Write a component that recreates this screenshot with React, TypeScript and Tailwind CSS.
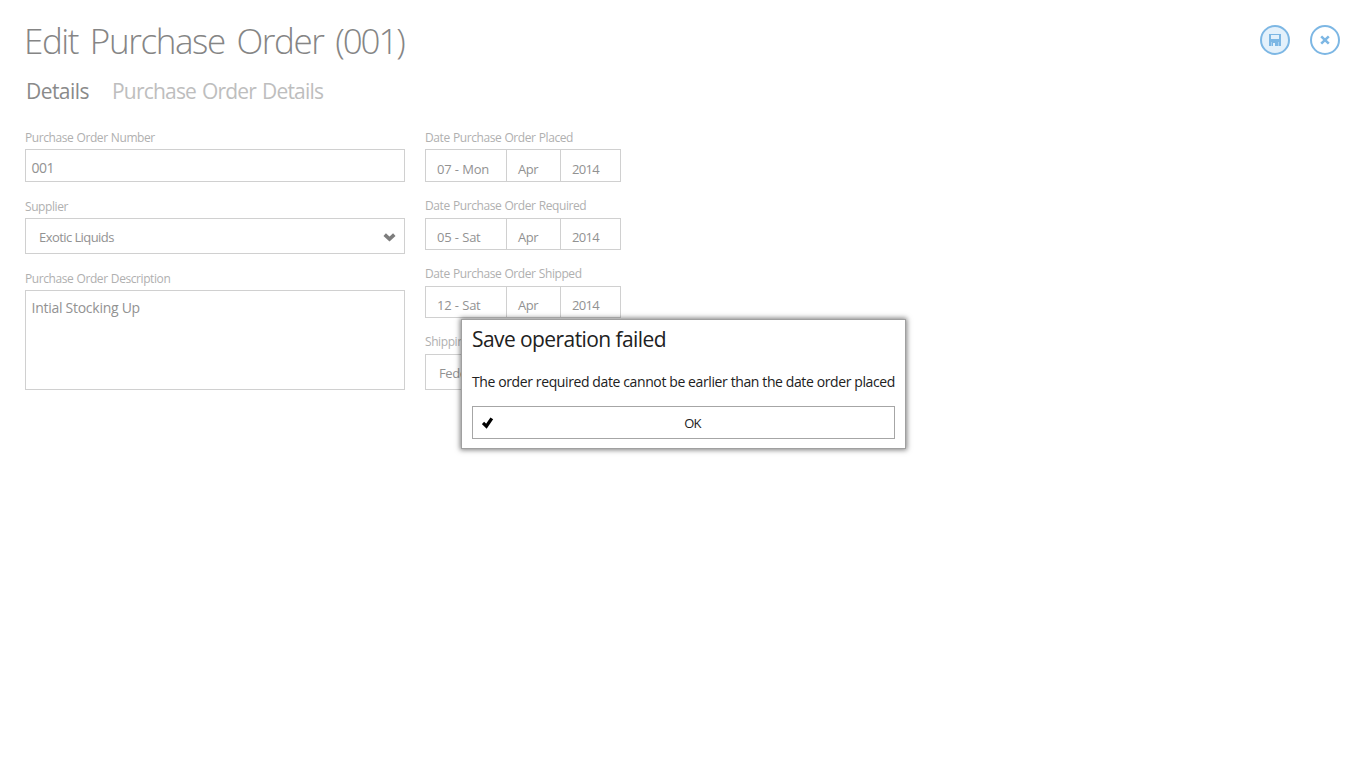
import React from "react";

const label = "text-[12px] leading-4 tracking-[-0.42px] [word-spacing:0.5px] text-[#b0b0b0] whitespace-nowrap";
const box = "border border-[#d0d0d0]";

function DateField({ title, day, first }: { title: string; day: string; first?: boolean }) {
  const cell = `${first ? "pt-[10px]" : "pt-[9px]"} pl-[11px] text-[13px] leading-[18px] text-[#929292] whitespace-nowrap`;
  return (
    <div className="h-[68px]">
      <div className={label}>{title}</div>
      <div className={`${first ? "mt-[3px] h-[33px]" : "mt-1 h-8"} ${box} flex w-[196px]`}>
        <div className={`${cell} w-[81px] border-r border-[#d0d0d0] tracking-[-0.3px] [word-spacing:0.5px]`}>{day}</div>
        <div className={`${cell} w-[54px] border-r border-[#d0d0d0] tracking-[-0.4px]`}>Apr</div>
        <div className={`${cell} flex-1 tracking-[-0.7px]`}>2014</div>
      </div>
    </div>
  );
}

function Chevron() {
  return (
    <svg className="mt-[3px] h-[9px] w-[13px]" viewBox="0 0 13 9" fill="none" stroke="#7d7d7d" strokeWidth="3.6">
      <path d="M1.7 1.6 L6.5 6.1 L11.3 1.6" />
    </svg>
  );
}

export default function App() {
  return (
    <div className="relative h-[768px] w-[1366px] overflow-hidden bg-white pl-[25px] font-['Open_Sans','Noto_Sans',sans-serif]">
      <header className="flex justify-between pr-[26px]">
        <h1 className="mt-[17px] -ml-px h-[48px] text-[35px] leading-[48px] font-light tracking-[-1.4px] [word-spacing:4px] text-[#858585] whitespace-nowrap">
          Edit Purchase Order <span className="tracking-[-2.1px]">(001)</span>
        </h1>
        <div className="mt-[25px] flex gap-5">
          <button className="flex size-[30px] items-center justify-center rounded-full border-2 border-[#7db7e4] bg-[#e4f1fb]">
            <svg className="size-3" viewBox="0 0 12 12" fill="#7db7e4">
              <path fillRule="evenodd" d="M0 0H12V12H0ZM2 1V5H10V1ZM4 9H6V12H4Z" />
              <path d="M2 8H3V12H2ZM9 8H10V12H9Z" fill="#a9d0ee" />
            </svg>
          </button>
          <button className="flex size-[30px] items-center justify-center rounded-full border-2 border-[#7db7e4]">
            <svg className="size-[10px]" viewBox="0 0 10 10" stroke="#7db7e4" strokeWidth="2.6">
              <path d="M1.2 1.4 L8.8 8.6 M8.8 1.4 L1.2 8.6" />
            </svg>
          </button>
        </div>
      </header>

      <nav className="mt-[12px] ml-px flex h-7 text-[21px] leading-7 whitespace-nowrap">
        <div className="w-[86px] tracking-[-0.55px] text-[#8a8a8a]">Details</div>
        <div className="tracking-[-0.8px] [word-spacing:1.2px] text-[#bebebe]">Purchase Order Details</div>
      </nav>

      <main className="mt-[25px] flex gap-5">
        <section className="w-[380px]">
          <div className={label}>Purchase Order Number</div>
          <div className={`${box} mt-[3px] h-[33px] pt-[9px] pl-[5.5px] text-[14px] leading-[18px] tracking-[-0.5px] text-[#929292]`}>001</div>
          <div className={`${label} mt-[17px]`}>Supplier</div>
          <div className={`${box} mt-[3px] flex h-9 items-center justify-between pr-2 pl-[13px] text-[13px] leading-[18px] tracking-[-0.57px] text-[#929292]`}>
            <span className="mt-px">Exotic Liquids</span>
            <Chevron />
          </div>
          <div className={`${label} mt-[17px]`}>Purchase Order Description</div>
          <div className={`${box} mt-[3px] h-[100px] pt-2 pl-[5.5px] text-[14px] leading-[18px] tracking-[-0.27px] text-[#929292]`}>
            Intial Stocking Up
          </div>
        </section>
        <section className="w-[380px]">
          <DateField title="Date Purchase Order Placed" day="07 - Mon" first />
          <DateField title="Date Purchase Order Required" day="05 - Sat" />
          <DateField title="Date Purchase Order Shipped" day="12 - Sat" />
          <div className={label}>Shippin</div>
          <div className={`${box} mt-1 h-9 pt-[9px] pl-[13px] text-[13px] leading-[18px] tracking-[-0.4px] text-[#929292]`}>
            Fede
          </div>
        </section>
      </main>

      <div
        role="dialog"
        className="absolute top-[319px] left-[461px] h-[130px] w-[445px] border border-[#a0a0a0] bg-white px-[10px] pt-[5px] text-[#212121] shadow-[0_0_5px_1px_rgba(0,0,0,0.5)]"
      >
        <h2 className="h-7 text-[21px] leading-7 tracking-[-0.58px] whitespace-nowrap">Save operation failed</h2>
        <p className="mt-[20px] h-[18px] text-[14px] leading-[18px] tracking-[-0.39px] whitespace-nowrap">
          The order required date cannot be earlier than the date order placed
        </p>
        <button className="mt-[15px] flex h-[33px] w-[423px] items-center border border-[#a6a6a6] pl-[9px] text-[13px] leading-[18px] tracking-[-0.7px]">
          <svg className="h-3 w-3" viewBox="0 0 12 12" fill="none" stroke="#000" strokeWidth="3.3">
            <path d="M1 6 L4.4 9.2 L9.8 1.4" />
          </svg>
          <span className="flex-1 pr-[3px] text-center">OK</span>
        </button>
      </div>
    </div>
  );
}
